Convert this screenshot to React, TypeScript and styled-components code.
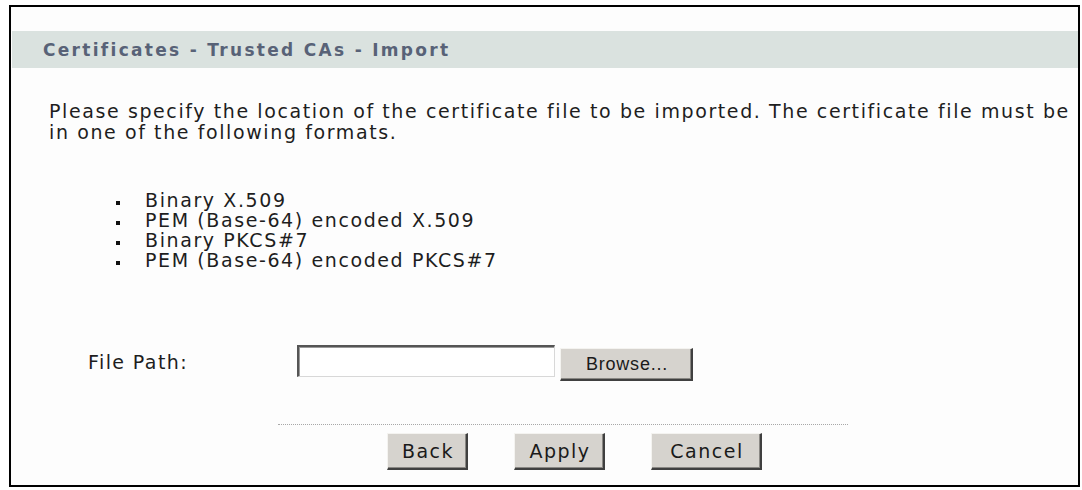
import React from "react";
import styled, { createGlobalStyle } from "styled-components";

const GlobalStyle = createGlobalStyle`
  body {
    margin: 0;
    background: #ffffff;
    font-family: "DejaVu Sans", Verdana, sans-serif;
  }
`;

const Frame = styled.div`
  box-sizing: border-box;
  width: 1071px;
  height: 482px;
  margin: 5px 0 0 9px;
  border: 2px solid #000;
  background: #fdfdfd;
  padding-top: 24px;
`;

const HeaderBar = styled.div`
  height: 37px;
  margin-left: 1px;
  padding-left: 31px;
  display: flex;
  align-items: center;
  background: #dae2df;
  color: #586277;
  font-weight: bold;
  font-size: 17px;
  letter-spacing: 2.3px;
`;

const Intro = styled.p`
  margin: 33px 0 0 38px;
  font-size: 19px;
  line-height: 21px;
  letter-spacing: 1.6px;
  white-space: nowrap;
  color: #1e1e1e;
`;

const FormatList = styled.ul`
  list-style: none;
  margin: 47px 0 0 0;
  padding: 0 0 0 134px;
  font-size: 19px;
  line-height: 20px;
  letter-spacing: 1.6px;
  color: #1e1e1e;
`;

const FormatItem = styled.li`
  position: relative;

  &::before {
    content: "";
    position: absolute;
    left: -29px;
    top: 11px;
    width: 4px;
    height: 4px;
    background: #111;
  }
`;

const FileRow = styled.div`
  display: flex;
  align-items: flex-start;
  margin: 75px 0 0 77px;
`;

const FieldLabel = styled.span`
  width: 209px;
  margin-top: 6px;
  font-size: 19px;
  letter-spacing: 1.4px;
  color: #1e1e1e;
`;

const PathInput = styled.div`
  box-sizing: border-box;
  width: 258px;
  height: 32px;
  background: #fff;
  border-style: solid;
  border-width: 2px 1px 1px 2px;
  border-color: #555 #d8d8d8 #d8d8d8 #555;
  box-shadow: inset 1px 1px 0 #999;
`;

const WinButton = styled.button<{ $w: number; $h: number }>`
  box-sizing: border-box;
  width: ${(p) => p.$w}px;
  height: ${(p) => p.$h}px;
  padding: 0 0 0 2px;
  background: #d6d3ce;
  border-style: solid;
  border-width: 1px 2px 2px 1px;
  border-color: #f4f3f0 #404040 #404040 #f4f3f0;
  box-shadow: inset -1px -1px 0 #8a8884;
  font-family: "DejaVu Sans", Verdana, sans-serif;
  font-size: 19px;
  letter-spacing: 1.5px;
  color: #1a1a1a;
  display: flex;
  align-items: center;
  justify-content: center;
`;

const BrowseButton = styled(WinButton)`
  margin: 3px 0 0 5px;
  font-family: "Liberation Sans", Arial, sans-serif;
  font-size: 18px;
  letter-spacing: 0.8px;
`;

const Divider = styled.div`
  width: 570px;
  margin: 43px 0 0 267px;
  border-top: 1px dotted #a8a8a8;
`;

const ButtonRow = styled.div`
  display: flex;
  gap: 46px;
  margin: 8px 0 0 376px;
`;

const formats = [
  "Binary X.509",
  "PEM (Base-64) encoded X.509",
  "Binary PKCS#7",
  "PEM (Base-64) encoded PKCS#7",
];

export default function App() {
  return (
    <>
      <GlobalStyle />
      <Frame>
        <HeaderBar>Certificates - Trusted CAs - Import</HeaderBar>
        <Intro>
          Please specify the location of the certificate file to be imported. The certificate file must be
          <br />
          in one of the following formats.
        </Intro>
        <FormatList>
          {formats.map((f) => (
            <FormatItem key={f}>{f}</FormatItem>
          ))}
        </FormatList>
        <FileRow>
          <FieldLabel>File Path:</FieldLabel>
          <PathInput />
          <BrowseButton $w={133} $h={33}>
            Browse...
          </BrowseButton>
        </FileRow>
        <Divider />
        <ButtonRow>
          <WinButton $w={81} $h={37}>Back</WinButton>
          <WinButton $w={91} $h={37}>Apply</WinButton>
          <WinButton $w={111} $h={37}>Cancel</WinButton>
        </ButtonRow>
      </Frame>
    </>
  );
}
